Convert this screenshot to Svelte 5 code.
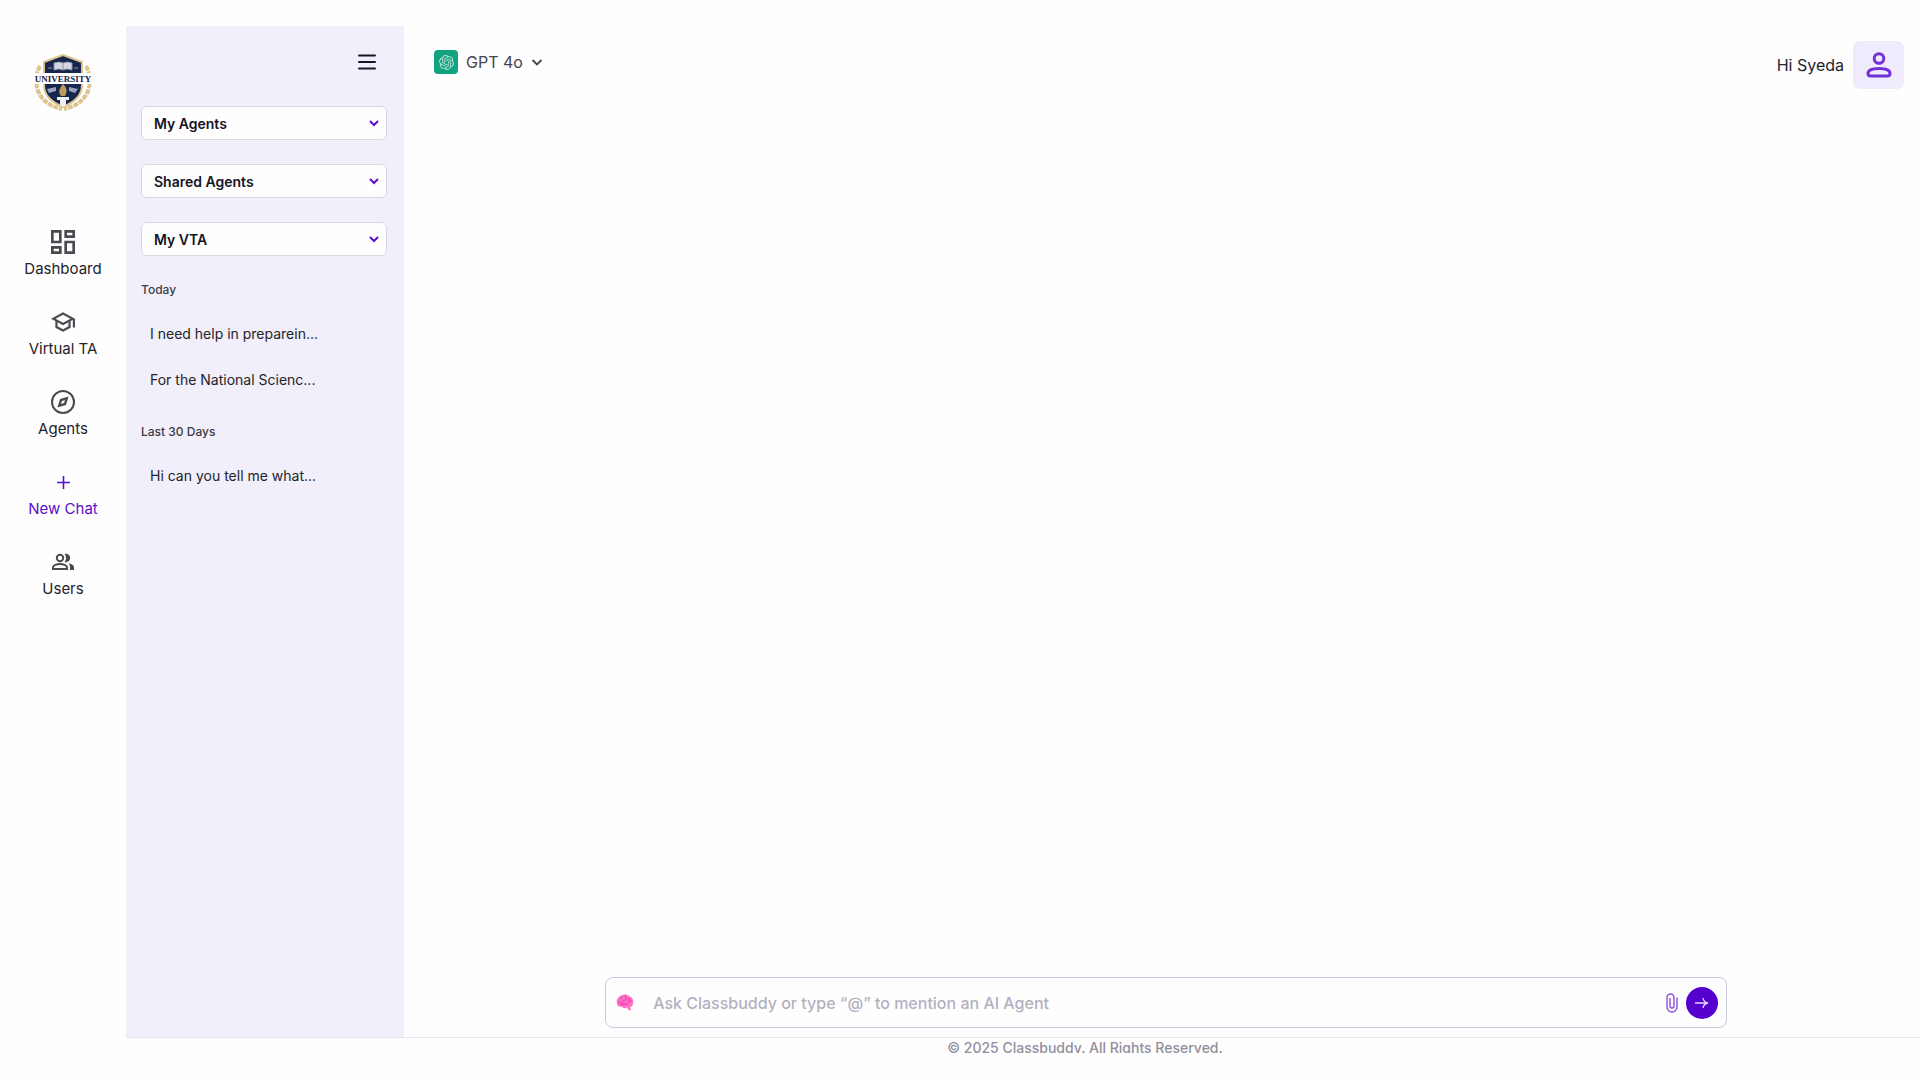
<script lang="ts">
  const navItems = [
    { id: 'dashboard', label: 'Dashboard' },
    { id: 'vta', label: 'Virtual TA' },
    { id: 'agents', label: 'Agents' },
    { id: 'chat', label: 'New Chat' },
    { id: 'users', label: 'Users' },
  ]

  const pickers = ['My Agents', 'Shared Agents', 'My VTA']

  const history = [
    { title: 'Today', chats: ['I need help in preparein...', 'For the National Scienc...'] },
    { title: 'Last 30 Days', chats: ['Hi can you tell me what...'] },
  ]

  let active = $state('chat')
  let prompt = $state('')
</script>

<div class="page">
  <aside class="rail">
    <a class="logo" href="#home" aria-label="University home">
      <svg viewBox="0 0 60 60">
        <g fill="none" stroke="#dcc48c" stroke-width="4" stroke-dasharray="5 1">
          <path d="M7 13C2 21 2 34 7 42c5 8 13 12 22 14" />
          <path d="M53 13c5 8 5 21 0 29-5 8-13 12-22 14" />
        </g>
        <path d="M30 2l19 7v23c0 11-8 17-19 22-11-5-19-11-19-22V9z" fill="#17264d" stroke="#dcc48c" stroke-width="2" />
        <path d="M21 10q5-2 9 0 4-2 9 0v7q-5-2-9 0-4-2-9 0z" fill="#d5d7e2" stroke="#8d92a8" />
        <path d="M30 10v7M15 15h4M41 15h4" stroke="#8d92a8" />
        <path d="M14 36l9-2v4l-7 2zM36 34l9 2-3 4-6-2z" fill="#9aa2bb" />
        <path d="M24 44h12v3h-3v5l-3 2-3-2v-5h-3z" fill="#eceef3" />
        <path d="M30 31c5 5 4 8 2 12h-4c-3-4-2-7 2-12z" fill="#bd9b5b" />
        <path d="M0 20h60v11H0z" fill="#fff" />
        <text x="30" y="29" text-anchor="middle">UNIVERSITY</text>
      </svg>
    </a>

    <nav>
      {#each navItems as item}
        <a
          href={'#' + item.id}
          class="nav-item"
          class:active={active === item.id}
          onclick={() => (active = item.id)}
        >
          {#if item.id === 'dashboard'}
            <svg viewBox="3 3 18 18" fill="currentColor"><path d="M19 5v2h-4V5h4M9 5v6H5V5h4m10 8v6h-4v-6h4M9 17v2H5v-2h4M21 3h-8v6h8V3zM11 3H3v10h8V3zm10 8h-8v10h8V11zm-10 4H3v6h8v-6z" /></svg>
          {:else if item.id === 'vta'}
            <svg viewBox="1 1 22 22" fill="currentColor"><path d="M12 3L1 9l4 2.18v6L12 21l7-3.82v-6l2-1.09V17h2V9L12 3zm6.82 6L12 12.72 5.18 9 12 5.28 18.82 9zM17 15.99l-5 2.73-5-2.73v-3.72L12 15l5-2.73v3.72z" /></svg>
          {:else if item.id === 'agents'}
            <svg viewBox="0 0 24 24" fill="none" stroke="currentColor" stroke-width="2"><circle cx="12" cy="12" r="11" /><path d="M8.2 15.8l1.8-5.8 5.8-1.8-1.8 5.8z" stroke-width="2.4" /></svg>
          {:else if item.id === 'chat'}
            <svg viewBox="0 0 24 24" fill="none" stroke="currentColor" stroke-width="1.6"><path d="M12.500 6v13M6 12.500h13" /></svg>
          {:else}
            <svg viewBox="0 0 24 24" fill="currentColor">
              <g fill="none" stroke="currentColor" stroke-width="2"><circle cx="9" cy="8" r="3.200" /><path d="M2 19v-1.500c0-2.300 4-3.500 7-3.500s7 1.200 7 3.500V19z" /></g>
              <path d="M13.500 4c3.200-.8 5.700 1.300 5.700 4s-2.500 4.800-5.700 4c1-1 1.500-2.500 1.500-4s-.5-3-1.500-4zM17.500 13.300c3 .5 5.500 1.800 5.500 4.100V20h-4v-2.600c0-1.700-.5-3-1.500-4.100z" />
            </svg>
          {/if}
          <span>{item.label}</span>
        </a>
      {/each}
    </nav>
  </aside>

  <div class="shell">
    <div class="body">
      <section class="sidebar">
        <button class="menu" aria-label="Toggle sidebar">
          <svg viewBox="0 0 20 18" stroke="currentColor" stroke-width="2" stroke-linecap="round"><path d="M2 2.500h16M2 9h16M2 15.500h16" /></svg>
        </button>

        <div class="pickers">
          {#each pickers as name}
            <div class="picker">
              <select aria-label={name}>
                <option>{name}</option>
              </select>
              <svg viewBox="0 0 10 10" fill="none" stroke="currentColor" stroke-width="2"><path d="M1 3l4 4 4-4" /></svg>
            </div>
          {/each}
        </div>

        {#each history as group}
          <div class="group">
            <h2>{group.title}</h2>
            <ul>
              {#each group.chats as chat}
                <li><a href="#history">{chat}</a></li>
              {/each}
            </ul>
          </div>
        {/each}
      </section>

      <main>
        <header>
          <button class="model">
            <span class="model-icon">
              <svg viewBox="0 0 24 24" fill="currentColor"><path d="M22.2819 9.8211a5.9847 5.9847 0 0 0-.5157-4.9108 6.0462 6.0462 0 0 0-6.5098-2.9A6.0651 6.0651 0 0 0 4.9807 4.1818a5.9847 5.9847 0 0 0-3.9977 2.9 6.0462 6.0462 0 0 0 .7427 7.0966 5.98 5.98 0 0 0 .511 4.9107 6.051 6.051 0 0 0 6.5146 2.9001A5.9847 5.9847 0 0 0 13.2599 24a6.0557 6.0557 0 0 0 5.7718-4.2058 5.9894 5.9894 0 0 0 3.9977-2.9001 6.0557 6.0557 0 0 0-.7475-7.0729zm-9.022 12.6081a4.4755 4.4755 0 0 1-2.8764-1.0408l.1419-.0804 4.7783-2.7582a.7948.7948 0 0 0 .3927-.6813v-6.7369l2.02 1.1686a.071.071 0 0 1 .038.052v5.5826a4.504 4.504 0 0 1-4.4945 4.4944zm-9.6607-4.1254a4.4708 4.4708 0 0 1-.5346-3.0137l.142.0852 4.783 2.7582a.7712.7712 0 0 0 .7806 0l5.8428-3.3685v2.3324a.0804.0804 0 0 1-.0332.0615L9.74 19.9502a4.4992 4.4992 0 0 1-6.1408-1.6464zM2.3408 7.8956a4.485 4.485 0 0 1 2.3655-1.9728V11.6a.7664.7664 0 0 0 .3879.6765l5.8144 3.3543-2.0201 1.1685a.0757.0757 0 0 1-.071 0l-4.8303-2.7865A4.504 4.504 0 0 1 2.3408 7.872zm16.5963 3.8558L13.1038 8.364 15.1192 7.2a.0757.0757 0 0 1 .071 0l4.8303 2.7913a4.4944 4.4944 0 0 1-.6765 8.1042v-5.6772a.79.79 0 0 0-.407-.667zm2.0107-3.0231l-.142-.0852-4.7735-2.7818a.7759.7759 0 0 0-.7854 0L9.409 9.2297V6.8974a.0662.0662 0 0 1 .0284-.0615l4.8303-2.7866a4.4992 4.4992 0 0 1 6.6802 4.66zM8.3065 12.863l-2.02-1.1638a.0804.0804 0 0 1-.038-.0567V6.0742a4.4992 4.4992 0 0 1 7.3757-3.4537l-.142.0805L8.704 5.459a.7948.7948 0 0 0-.3927.6813zm1.0976-2.3654l2.602-1.4998 2.6069 1.4998v2.9994l-2.5974 1.4997-2.6067-1.4997Z" /></svg>
            </span>
            <span>GPT 4o</span>
            <svg class="caret" viewBox="0 0 12 12" fill="none" stroke="currentColor" stroke-width="1.8"><path d="M1.500 4L6 8.500 10.500 4" /></svg>
          </button>

          <div class="user">
            <span>Hi Syeda</span>
            <button class="avatar" aria-label="Profile">
              <svg viewBox="0 0 28 28" fill="none" stroke="currentColor" stroke-width="3"><circle cx="14" cy="7.500" r="4.800" /><path d="M3 22.500c0-3.500 5.500-5 11-5s11 1.500 11 5c0 1.800-1 2.500-2.500 2.500h-17C4 25 3 24.300 3 22.500z" /></svg>
            </button>
          </div>
        </header>

        <form class="composer" onsubmit={(e) => e.preventDefault()}>
          <svg class="brain" viewBox="0 0 18 17">
            <path d="M1 9C0 6 2 3 5 2c2-2 6-2 8 0 3 1 5 4 4 7 0 2-1 4-3 4l1 3-2 .5-2-3c-2 1-4 1-5-1-3 1-5-1-5-3.500z" fill="#ff70c4" />
            <path d="M5 2c1 1 0 3-1 3M9 1c0 2 2 2 1 4s-3 1-4 3M13 4c-1 2 1 3 3 3M2 9c2-1 3 0 4 2 2-2 4-1 5 0M11 8h3" fill="none" stroke="#f43fae" stroke-width="1.200" />
          </svg>
          <input bind:value={prompt} aria-label="Message" placeholder="Ask Classbuddy or type “@” to mention an AI Agent" />
          <button class="attach" type="button" aria-label="Attach file">
            <svg viewBox="0 0 12 20" fill="none" stroke="currentColor" stroke-width="1.400" stroke-linecap="round"><path d="M11 5v9a5 5 0 0 1-10 0V4.500a3.500 3.500 0 0 1 7 0V13a2 2 0 0 1-4 0V5.500" /></svg>
          </button>
          <button class="send" aria-label="Send">
            <svg viewBox="0 0 16 16" fill="none" stroke="currentColor" stroke-width="1.300"><path d="M1 8h13M9 3c.5 3 2.500 4.500 5 5-2.500.5-4.500 2-5 5" /></svg>
          </button>
        </form>
      </main>
    </div>

    <footer>
      <p>© 2025 Classbuddy. All Rights Reserved.</p>
    </footer>
  </div>
</div>

<style>
  :global(body) {
    margin: 0;
    background: #fefefe;
  }

  .page {
    display: flex;
    box-sizing: border-box;
    min-height: 100vh;
    padding-top: 26px;
    font-family: Inter, sans-serif;
    font-size: 15px;
    color: #23232b;
  }

  button {
    padding: 0;
    border: none;
    background: none;
    color: inherit;
    font: inherit;
    cursor: pointer;
  }

  a {
    color: inherit;
    text-decoration: none;
  }

  svg {
    display: block;
    flex: none;
  }

  .rail {
    width: 126px;
    flex: none;
    display: flex;
    flex-direction: column;
    align-items: center;
    padding-top: 27px;
    box-sizing: border-box;
  }

  .logo svg {
    width: 60px;
    height: 60px;
  }

  .logo text {
    font: bold 9px 'Liberation Serif', serif;
    fill: #17264d;
  }

  nav {
    display: flex;
    flex-direction: column;
    gap: 31px;
    margin-top: 117px;
  }

  .nav-item {
    display: flex;
    flex-direction: column;
    align-items: center;
    gap: 5px;
    line-height: 20px;
  }

  .nav-item svg {
    width: 24px;
    height: 24px;
    color: #4b4a50;
  }

  .nav-item.active,
  .nav-item.active svg {
    color: #5b0fc9;
  }

  .shell {
    flex: 1;
    min-width: 0;
    display: flex;
    flex-direction: column;
  }

  .body {
    flex: 1;
    display: flex;
  }

  .sidebar {
    width: 278px;
    flex: none;
    box-sizing: border-box;
    padding: 24px 17px 24px 15px;
    background: #f1eff9;
  }

  .menu {
    display: block;
    margin: 0 10px 0 auto;
    padding: 3px 0;
    color: #16162b;
  }

  .menu svg {
    width: 20px;
    height: 18px;
  }

  .pickers {
    display: flex;
    flex-direction: column;
    gap: 24px;
    margin: 32px 0 24px;
  }

  .picker {
    position: relative;
  }

  .picker select {
    display: block;
    appearance: none;
    width: 100%;
    height: 34px;
    padding: 0 28px 0 12px;
    border: 1px solid #d9d7e2;
    border-radius: 6px;
    background: #fefefe;
    color: #14141f;
    font: 600 14px Inter, sans-serif;
  }

  .picker svg {
    position: absolute;
    top: 12px;
    right: 8px;
    width: 10px;
    height: 10px;
    color: #5b0fc9;
    pointer-events: none;
  }

  .group {
    margin-bottom: 19px;
  }

  h2 {
    margin: 0 0 11px;
    font-size: 12px;
    font-weight: 500;
    line-height: 20px;
    color: #3d3c46;
  }

  ul {
    margin: 0;
    padding: 0;
    list-style: none;
  }

  li a {
    display: block;
    padding: 0 9px;
    font-size: 14px;
    line-height: 46px;
  }

  main {
    flex: 1;
    display: flex;
    flex-direction: column;
    justify-content: space-between;
    padding: 15px 16px 9px 24px;
  }

  header {
    display: flex;
    justify-content: space-between;
    align-items: flex-start;
  }

  .model {
    display: flex;
    align-items: center;
    gap: 8px;
    padding: 9px 6px;
    font-size: 16px;
    line-height: 24px;
    color: #45444f;
  }

  .model-icon {
    display: grid;
    place-items: center;
    width: 24px;
    height: 24px;
    border-radius: 4px;
    background: #10a37f;
    color: #b5e2d5;
  }

  .model-icon svg {
    width: 15px;
    height: 15px;
  }

  .caret {
    width: 12px;
    height: 12px;
  }

  .user {
    display: flex;
    align-items: center;
    gap: 9px;
    font-size: 16px;
  }

  .avatar {
    display: grid;
    place-items: center;
    width: 51px;
    height: 48px;
    border-radius: 7px;
    background: #f0ebfc;
    color: #7230d8;
  }

  .avatar svg {
    width: 28px;
    height: 28px;
  }

  .composer {
    display: flex;
    align-items: center;
    width: 76%;
    height: 51px;
    margin: 0 auto;
    padding: 0 8px 0 10px;
    box-sizing: border-box;
    border: 1px solid #cbc8db;
    border-radius: 8px;
    background: #fefefe;
  }

  .brain {
    width: 18px;
    height: 17px;
  }

  .composer input {
    flex: 1;
    min-width: 0;
    padding: 0 19px;
    border: none;
    outline: none;
    background: none;
    color: #23232b;
    font: 500 16px Inter, sans-serif;
  }

  .composer input::placeholder {
    color: #b3b1be;
    opacity: 1;
  }

  .attach {
    margin-right: 8px;
    color: #8a4fdd;
  }

  .attach svg {
    width: 12px;
    height: 20px;
  }

  .send {
    display: grid;
    place-items: center;
    width: 32px;
    height: 32px;
    border-radius: 50%;
    background: #5500cc;
    color: #e4d8f8;
  }

  .send svg {
    width: 16px;
    height: 16px;
  }

  footer {
    height: 42px;
    padding-left: 124px;
    border-top: 1px solid #e6e4ec;
  }

  /* the line box is shorter than the glyphs, so descenders are cut */
  footer p {
    height: 15px;
    margin: 0;
    overflow: hidden;
    font-size: 14px;
    font-weight: 500;
    line-height: 20px;
    text-align: center;
    color: #918f9d;
  }
</style>
